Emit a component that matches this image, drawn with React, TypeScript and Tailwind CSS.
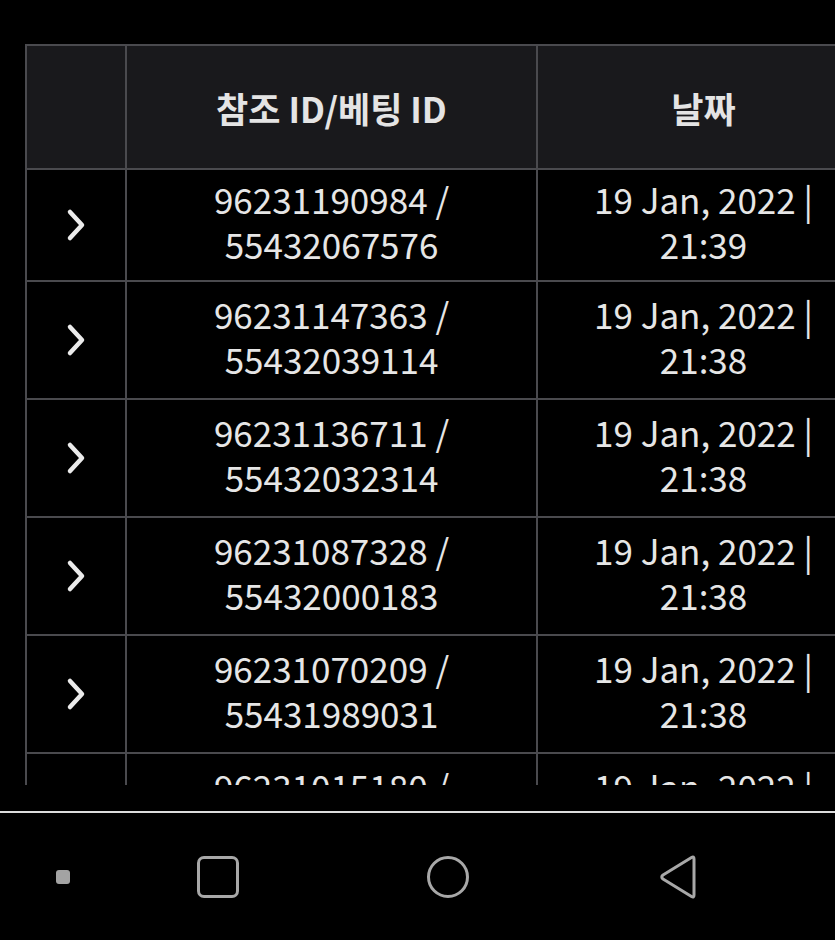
import React from "react";

const rows = [
  { a: "96231190984 /", b: "55432067576", d: "21:39", h: "h-[112px]" },
  { a: "96231147363 /", b: "55432039114", d: "21:38", h: "h-[118px]" },
  { a: "96231136711 /", b: "55432032314", d: "21:38", h: "h-[118px]" },
  { a: "96231087328 /", b: "55432000183", d: "21:38", h: "h-[118px]" },
  { a: "96231070209 /", b: "55431989031", d: "21:38", h: "h-[118px]" },
  { a: "96231015180 /", b: "55431960000", d: "21:38", h: "h-[118px]" },
];

function Chevron() {
  return (
    <svg width="24" height="36" viewBox="0 0 24 36" fill="none">
      <polyline
        points="6,5 18,18 6,31"
        stroke="#ebebeb"
        strokeWidth="4.5"
        strokeLinecap="round"
        strokeLinejoin="round"
      />
    </svg>
  );
}

export default function App() {
  const font = { fontFamily: '"Noto Sans CJK KR", "Noto Sans", sans-serif' };
  return (
    <div className="w-[835px] h-[940px] bg-black overflow-hidden flex flex-col" style={font}>
      <div className="h-[785px] overflow-hidden pt-[44px] pl-[25px] shrink-0">
        <div className="w-[846px] border-l-2 border-t-2 border-[#4a4a4e] flex flex-col">
          <div className="flex h-[124px] bg-[#19191c] shrink-0">
            <div className="w-[100px] border-r-2 border-b-2 border-[#4a4a4e]" />
            <div className="w-[411px] border-r-2 border-b-2 border-[#4a4a4e] flex items-center justify-center text-[35px] font-bold text-[#e4e4e4] leading-[45px]">
              참조 ID/베팅 ID
            </div>
            <div className="w-[333px] border-r-2 border-b-2 border-[#4a4a4e] flex items-center justify-center text-[35px] font-bold text-[#e4e4e4] leading-[45px]">
              날짜
            </div>
          </div>
          {rows.map((r, i) => (
            <div key={i} className={`flex ${r.h} shrink-0`}>
              <div className="w-[100px] border-r-2 border-b-2 border-[#4a4a4e] flex items-center justify-center">
                <Chevron />
              </div>
              <div className="w-[411px] border-r-2 border-b-2 border-[#4a4a4e] flex items-center justify-center text-[35px] text-[#e6e6e6] leading-[45px] pb-[8px]">
                <p className="text-center">
                  {r.a}
                  <br />
                  {r.b}
                </p>
              </div>
              <div className="w-[333px] border-r-2 border-b-2 border-[#4a4a4e] flex items-center justify-center text-[35px] text-[#e6e6e6] leading-[45px] pb-[8px]">
                <p className="text-center">
                  19 Jan, 2022 |
                  <br />
                  {r.d}
                </p>
              </div>
            </div>
          ))}
        </div>
      </div>
      <div className="h-[26px] shrink-0" />
      <div className="h-[2px] bg-[#dcdcdc] shrink-0" />
      <div className="flex items-center h-[127px] pl-[56px] shrink-0">
        <div className="w-[14px] h-[14px] rounded-[3px] bg-[#a3a3a3]" />
        <div className="ml-[127px] w-[42px] h-[42px] rounded-[7px] border-[3px] border-[#a8a8a8]" />
        <div className="ml-[188px] w-[42px] h-[42px] rounded-full border-[3px] border-[#a8a8a8]" />
        <svg className="ml-[190px]" width="40" height="44" viewBox="0 0 40 44" fill="none">
          <path
            d="M35 4 L35 40 Q35 43 32.5 41.5 L4 24 Q1.5 22 4 20 L32.5 2.5 Q35 1 35 4 Z"
            stroke="#a8a8a8"
            strokeWidth="3"
            strokeLinejoin="round"
          />
        </svg>
      </div>
    </div>
  );
}
